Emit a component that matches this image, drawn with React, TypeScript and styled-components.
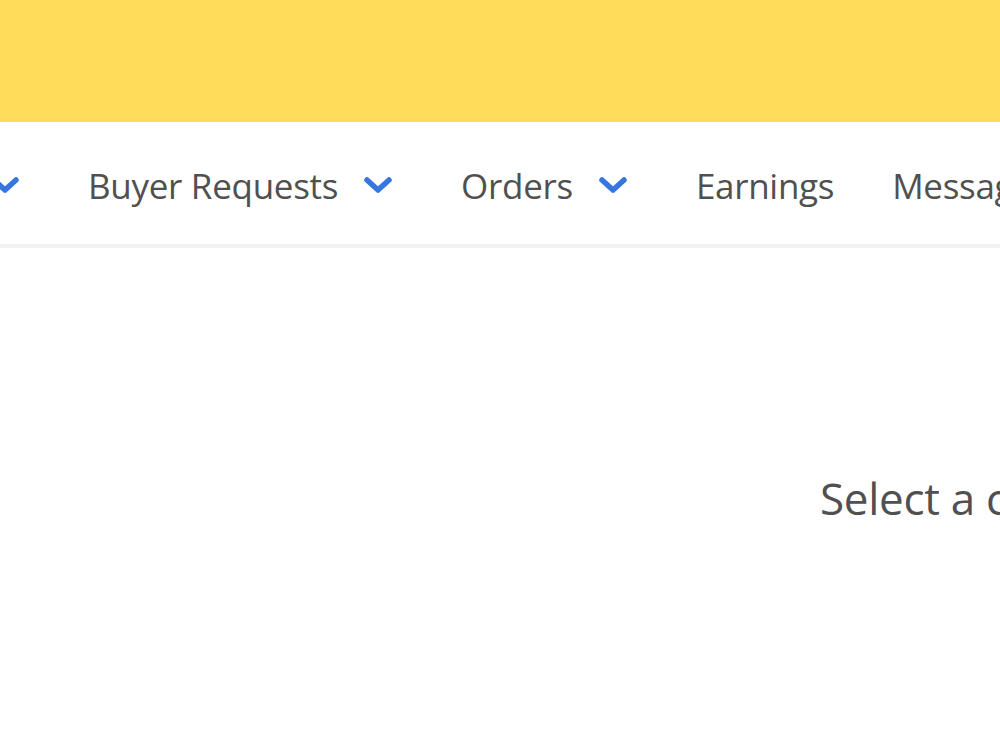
import React from "react";
import styled, { createGlobalStyle } from "styled-components";

const GlobalStyle = createGlobalStyle`
  html, body {
    margin: 0;
    padding: 0;
    background: #ffffff;
    overflow: hidden;
  }
  body {
    font-family: "Open Sans", "Noto Sans", sans-serif;
  }
`;

type NavItem = {
  label: string;
  dropdown: boolean;
};

// the first entry sits off the left edge; only its arrow peeks in
const LEAD_ITEM: NavItem = { label: "Gigs", dropdown: true };

const NAV_ITEMS: NavItem[] = [
  { label: "Buyer Requests", dropdown: true },
  { label: "Orders", dropdown: true },
  { label: "Earnings", dropdown: false },
  { label: "Messages", dropdown: false },
  { label: "Analytics", dropdown: false },
];

const Page = styled.div`
  width: 1000px;
  height: 750px;
  overflow: hidden;
  display: flex;
  flex-direction: column;
`;

const Banner = styled.div`
  height: 122px;
  flex-shrink: 0;
  background: #ffdc59;
`;

const NavBar = styled.nav`
  height: 126px;
  box-sizing: border-box;
  padding-top: 4px;
  flex-shrink: 0;
  border-bottom: 4px solid #f1f1f1;
  display: flex;
  align-items: center;
  white-space: nowrap;
  overflow: hidden;
`;

const NavTrack = styled.ul`
  list-style: none;
  margin: 0;
  padding: 0 0 0 30px;
  display: flex;
  align-items: center;
  gap: 58px;
`;

const LeadSlot = styled.div`
  width: 0;
  flex-shrink: 0;
  display: flex;
  justify-content: flex-end;
`;

const NavLink = styled.li<{ $dropdown: boolean }>`
  display: flex;
  align-items: center;
  gap: 25px;
  flex-shrink: 0;
  margin-right: ${(p) => (p.$dropdown ? "10px" : "0")};
  font-size: 35px;
  color: #505050;
  letter-spacing: -0.3px;
`;

const Chevron = styled.svg`
  width: 30px;
  height: 20px;
  flex-shrink: 0;
`;

const Main = styled.main`
  flex: 1;
  display: grid;
  grid-template-columns: 820px 1fr;
`;

const ListColumn = styled.div``;

const EmptyPanel = styled.div`
  padding-top: 220px;
  font-size: 44px;
  color: #505050;
  white-space: nowrap;
  letter-spacing: -0.3px;
`;

const DownChevron = () => (
  <Chevron viewBox="0 0 30 20">
    <polyline
      points="4,5 15,15 26,5"
      fill="none"
      stroke="#3676e0"
      strokeWidth="5.5"
      strokeLinecap="round"
      strokeLinejoin="round"
    />
  </Chevron>
);

const NavEntry = ({ item }: { item: NavItem }) => (
  <NavLink $dropdown={item.dropdown}>
    {item.label}
    {item.dropdown && <DownChevron />}
  </NavLink>
);

const App = () => {
  return (
    <>
      <GlobalStyle />
      <Page>
        <Banner />
        <NavBar>
          <NavTrack>
            <LeadSlot>
              <NavEntry item={LEAD_ITEM} />
            </LeadSlot>
            {NAV_ITEMS.map((item) => (
              <NavEntry key={item.label} item={item} />
            ))}
          </NavTrack>
        </NavBar>
        <Main>
          <ListColumn />
          <EmptyPanel>Select a conversation</EmptyPanel>
        </Main>
      </Page>
    </>
  );
};

export default App;
